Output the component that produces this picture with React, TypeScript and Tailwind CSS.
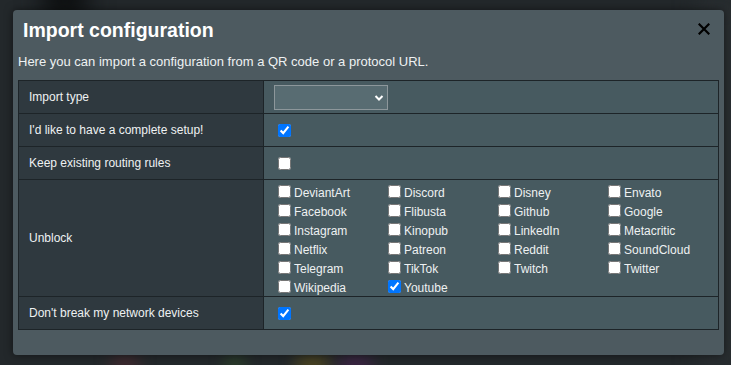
import React from "react";

const SERVICES = [
  ["DeviantArt", "Discord", "Disney", "Envato"],
  ["Facebook", "Flibusta", "Github", "Google"],
  ["Instagram", "Kinopub", "LinkedIn", "Metacritic"],
  ["Netflix", "Patreon", "Reddit", "SoundCloud"],
  ["Telegram", "TikTok", "Twitch", "Twitter"],
  ["Wikipedia", "Youtube"],
];

const CHECKED = new Set(["Youtube"]);

function Box({ checked }: { checked?: boolean }) {
  return (
    <input
      type="checkbox"
      defaultChecked={checked}
      className="m-0 ml-[4px] mr-[3px] h-[13px] w-[13px] shrink-0"
    />
  );
}

function Row({
  label,
  children,
  tall,
}: {
  label: string;
  children: React.ReactNode;
  tall?: boolean;
}) {
  return (
    <div className="flex border-t border-[#1d2428] first:border-t-0">
      <div
        className={`flex w-[245px] shrink-0 items-center border-r border-[#1d2428] bg-[#2f393f] pl-[10px] ${
          tall ? "h-[116px]" : "h-[32px]"
        }`}
      >
        {label}
      </div>
      <div className="flex flex-1 items-center bg-[#475a60] pl-[10px]">{children}</div>
    </div>
  );
}

export default function App() {
  return (
    <div
      className="relative h-[365px] w-[731px] overflow-hidden bg-[#23282b] pt-[10px] pl-[13px]"
      style={{ fontFamily: '"Liberation Sans", Arial, sans-serif' }}
    >
      {/* blurred page behind the dialog */}
      <div className="absolute left-[40px] top-[-20px] h-[40px] w-[50px] rounded-full bg-[#0d0f10] blur-md" />
      <div className="absolute left-[700px] top-[0px] h-[365px] w-[40px] bg-[#2b3033] blur-md" />
      <div className="absolute bottom-[-6px] left-[110px] h-[14px] w-[30px] rounded-full bg-[#4a2a30] blur-sm" />
      <div className="absolute bottom-[-6px] left-[225px] h-[14px] w-[20px] rounded-full bg-[#2f4a2a] blur-sm" />
      <div className="absolute bottom-[-6px] left-[295px] h-[14px] w-[35px] rounded-full bg-[#5a4f1e] blur-sm" />
      <div className="absolute bottom-[-6px] left-[338px] h-[14px] w-[35px] rounded-full bg-[#45234d] blur-sm" />

      <div className="relative h-[345px] w-[711px] rounded-[4px] bg-[#4d5a60] px-[5px] shadow-[0_0_8px_rgba(0,0,0,0.5)]">
        <div className="flex h-[40px] items-start justify-between pl-[5px] pr-[8px] pt-[8px]">
          <h1 className="text-[19.5px] font-bold leading-[24px] text-white">
            Import configuration
          </h1>
          <button className="mt-[4px] flex h-[14px] w-[14px] items-center justify-center">
            <svg width="12" height="12" viewBox="0 0 12 12">
              <path
                d="M1.5 1.5 L10.5 10.5 M10.5 1.5 L1.5 10.5"
                stroke="#000"
                strokeWidth="2.2"
                strokeLinecap="square"
              />
            </svg>
          </button>
        </div>
        <p className="mt-[4px] text-[13px] leading-[16px] text-[#eef1f2]">
          Here you can import a configuration from a QR code or a protocol URL.
        </p>

        <div className="mt-[10px] border border-[#1d2428] text-[12px] leading-[14px] text-[#eef1f2]">
          <Row label="Import type">
            <div className="relative h-[25px] w-[114px] border border-[#8d979b] bg-[#586c72]">
              <svg
                className="absolute right-[3px] top-[8px]"
                width="10"
                height="8"
                viewBox="0 0 10 8"
              >
                <path
                  d="M1.5 2 L5 5.5 L8.5 2"
                  fill="none"
                  stroke="#fff"
                  strokeWidth="2"
                />
              </svg>
            </div>
          </Row>
          <Row label="I'd like to have a complete setup!">
            <Box checked />
          </Row>
          <Row label="Keep existing routing rules">
            <Box />
          </Row>
          <Row label="Unblock" tall>
            <div className="flex flex-col self-stretch pt-[2px]">
              {SERVICES.map((row, i) => (
                <div key={i} className="flex h-[19px]">
                  {row.map((name) => (
                    <label key={name} className="flex w-[110px] items-center">
                      <Box checked={CHECKED.has(name)} />
                      <span className="pt-[2px]">{name}</span>
                    </label>
                  ))}
                </div>
              ))}
            </div>
          </Row>
          <Row label="Don't break my network devices">
            <Box checked />
          </Row>
        </div>
      </div>
    </div>
  );
}
